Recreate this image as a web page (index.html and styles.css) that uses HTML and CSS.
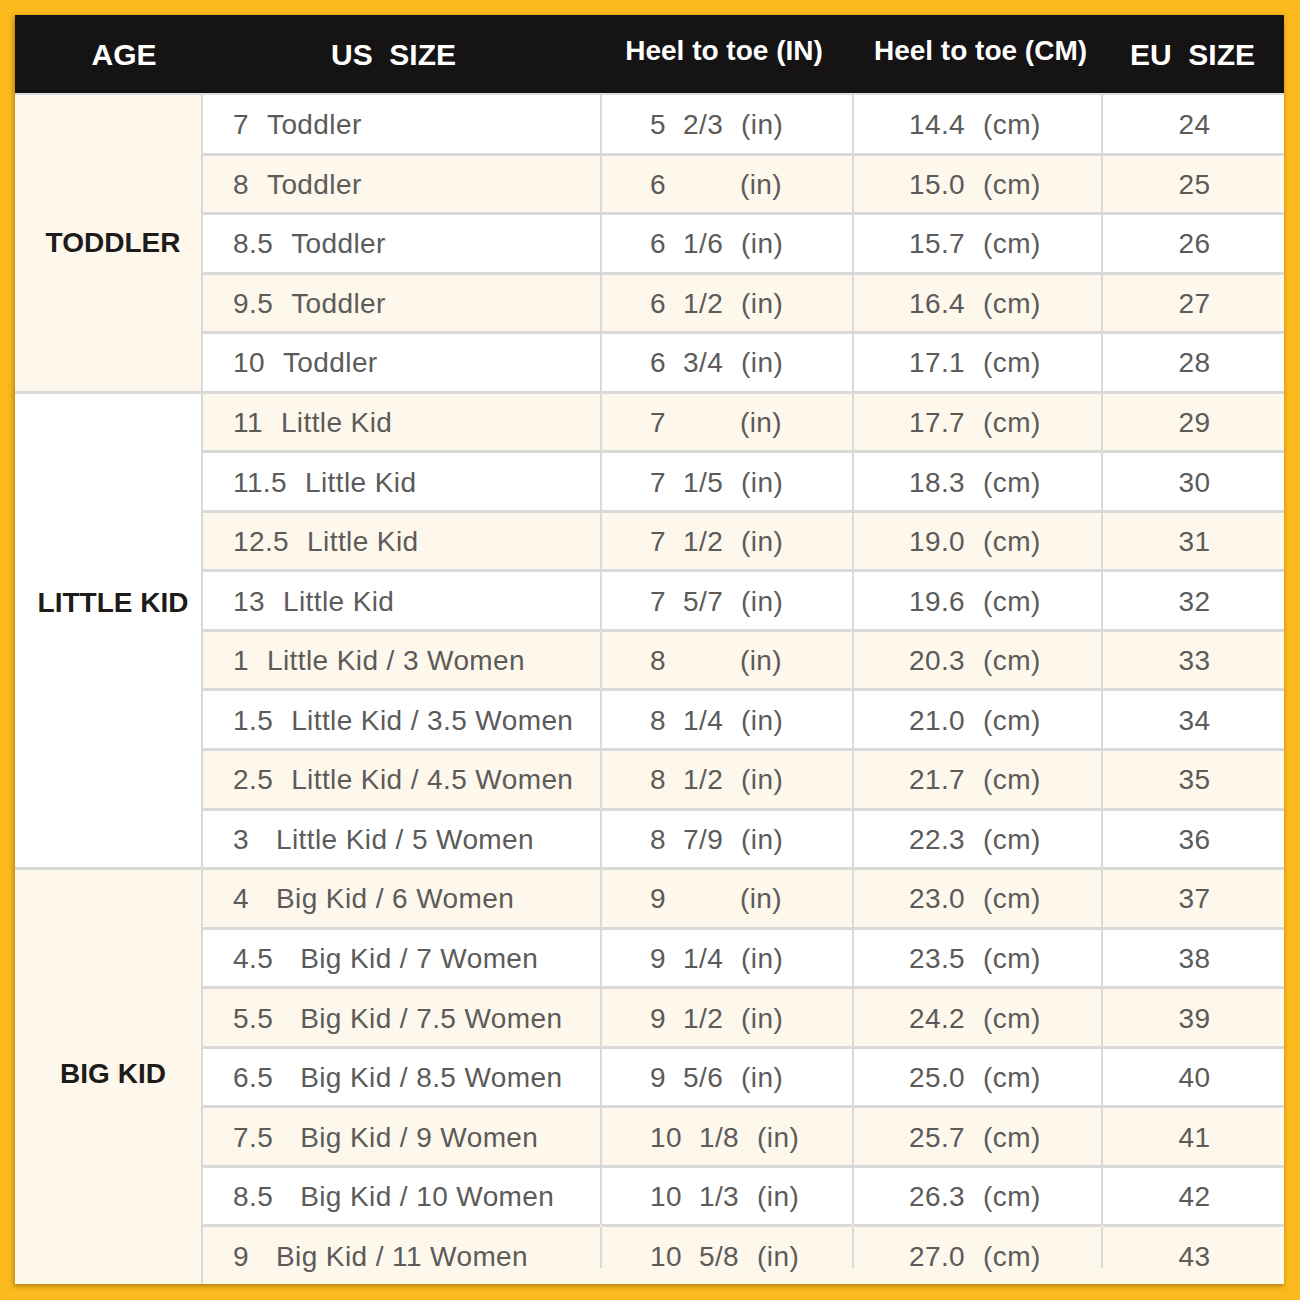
FILE: index.html
```html
<!DOCTYPE html>
<html lang="en">
<head>
<meta charset="utf-8">
<title>Size Chart</title>
<link rel="stylesheet" href="styles.css">
</head>
<body>
<div class="page">
  <div class="chart">
    <div class="hd hd-age big">AGE</div>
    <div class="hd hd-us big">US&nbsp;&nbsp;SIZE</div>
    <div class="hd hd-in">Heel to toe (IN)</div>
    <div class="hd hd-cm">Heel to toe (CM)</div>
    <div class="hd hd-eu big">EU&nbsp;&nbsp;SIZE</div>

    <div class="age age-toddler">TODDLER</div>
    <div class="age age-little">LITTLE KID</div>
    <div class="age age-big">BIG KID</div>

    <div class="c us r1"><span class="n">7</span>Toddler</div>
    <div class="c in r1"><span class="w">5</span><span class="f">2/3</span><span class="u">(in)</span></div>
    <div class="c cm r1"><span class="w">14.4</span><span class="u">(cm)</span></div>
    <div class="c eu r1">24</div>

    <div class="c us alt"><span class="n">8</span>Toddler</div>
    <div class="c in alt"><span class="w">6</span><span class="f"></span><span class="u">(in)</span></div>
    <div class="c cm alt"><span class="w">15.0</span><span class="u">(cm)</span></div>
    <div class="c eu alt">25</div>

    <div class="c us"><span class="n">8.5</span>Toddler</div>
    <div class="c in"><span class="w">6</span><span class="f">1/6</span><span class="u">(in)</span></div>
    <div class="c cm"><span class="w">15.7</span><span class="u">(cm)</span></div>
    <div class="c eu">26</div>

    <div class="c us alt"><span class="n">9.5</span>Toddler</div>
    <div class="c in alt"><span class="w">6</span><span class="f">1/2</span><span class="u">(in)</span></div>
    <div class="c cm alt"><span class="w">16.4</span><span class="u">(cm)</span></div>
    <div class="c eu alt">27</div>

    <div class="c us"><span class="n">10</span>Toddler</div>
    <div class="c in"><span class="w">6</span><span class="f">3/4</span><span class="u">(in)</span></div>
    <div class="c cm"><span class="w">17.1</span><span class="u">(cm)</span></div>
    <div class="c eu">28</div>

    <div class="c us alt"><span class="n">11</span>Little Kid</div>
    <div class="c in alt"><span class="w">7</span><span class="f"></span><span class="u">(in)</span></div>
    <div class="c cm alt"><span class="w">17.7</span><span class="u">(cm)</span></div>
    <div class="c eu alt">29</div>

    <div class="c us"><span class="n">11.5</span>Little Kid</div>
    <div class="c in"><span class="w">7</span><span class="f">1/5</span><span class="u">(in)</span></div>
    <div class="c cm"><span class="w">18.3</span><span class="u">(cm)</span></div>
    <div class="c eu">30</div>

    <div class="c us alt"><span class="n">12.5</span>Little Kid</div>
    <div class="c in alt"><span class="w">7</span><span class="f">1/2</span><span class="u">(in)</span></div>
    <div class="c cm alt"><span class="w">19.0</span><span class="u">(cm)</span></div>
    <div class="c eu alt">31</div>

    <div class="c us"><span class="n">13</span>Little Kid</div>
    <div class="c in"><span class="w">7</span><span class="f">5/7</span><span class="u">(in)</span></div>
    <div class="c cm"><span class="w">19.6</span><span class="u">(cm)</span></div>
    <div class="c eu">32</div>

    <div class="c us alt"><span class="n">1</span>Little Kid / 3 Women</div>
    <div class="c in alt"><span class="w">8</span><span class="f"></span><span class="u">(in)</span></div>
    <div class="c cm alt"><span class="w">20.3</span><span class="u">(cm)</span></div>
    <div class="c eu alt">33</div>

    <div class="c us"><span class="n">1.5</span>Little Kid / 3.5 Women</div>
    <div class="c in"><span class="w">8</span><span class="f">1/4</span><span class="u">(in)</span></div>
    <div class="c cm"><span class="w">21.0</span><span class="u">(cm)</span></div>
    <div class="c eu">34</div>

    <div class="c us alt"><span class="n">2.5</span>Little Kid / 4.5 Women</div>
    <div class="c in alt"><span class="w">8</span><span class="f">1/2</span><span class="u">(in)</span></div>
    <div class="c cm alt"><span class="w">21.7</span><span class="u">(cm)</span></div>
    <div class="c eu alt">35</div>

    <div class="c us"><span class="n wide">3</span>Little Kid / 5 Women</div>
    <div class="c in"><span class="w">8</span><span class="f">7/9</span><span class="u">(in)</span></div>
    <div class="c cm"><span class="w">22.3</span><span class="u">(cm)</span></div>
    <div class="c eu">36</div>

    <div class="c us alt"><span class="n wide">4</span>Big Kid / 6 Women</div>
    <div class="c in alt"><span class="w">9</span><span class="f"></span><span class="u">(in)</span></div>
    <div class="c cm alt"><span class="w">23.0</span><span class="u">(cm)</span></div>
    <div class="c eu alt">37</div>

    <div class="c us"><span class="n wide">4.5</span>Big Kid / 7 Women</div>
    <div class="c in"><span class="w">9</span><span class="f">1/4</span><span class="u">(in)</span></div>
    <div class="c cm"><span class="w">23.5</span><span class="u">(cm)</span></div>
    <div class="c eu">38</div>

    <div class="c us alt"><span class="n wide">5.5</span>Big Kid / 7.5 Women</div>
    <div class="c in alt"><span class="w">9</span><span class="f">1/2</span><span class="u">(in)</span></div>
    <div class="c cm alt"><span class="w">24.2</span><span class="u">(cm)</span></div>
    <div class="c eu alt">39</div>

    <div class="c us"><span class="n wide">6.5</span>Big Kid / 8.5 Women</div>
    <div class="c in"><span class="w">9</span><span class="f">5/6</span><span class="u">(in)</span></div>
    <div class="c cm"><span class="w">25.0</span><span class="u">(cm)</span></div>
    <div class="c eu">40</div>

    <div class="c us alt"><span class="n wide">7.5</span>Big Kid / 9 Women</div>
    <div class="c in alt"><span class="w">10</span><span class="f">1/8</span><span class="u">(in)</span></div>
    <div class="c cm alt"><span class="w">25.7</span><span class="u">(cm)</span></div>
    <div class="c eu alt">41</div>

    <div class="c us"><span class="n wide">8.5</span>Big Kid / 10 Women</div>
    <div class="c in"><span class="w">10</span><span class="f">1/3</span><span class="u">(in)</span></div>
    <div class="c cm"><span class="w">26.3</span><span class="u">(cm)</span></div>
    <div class="c eu">42</div>

    <div class="c us alt last"><span class="n wide">9</span>Big Kid / 11 Women</div>
    <div class="c in alt last"><span class="w">10</span><span class="f">5/8</span><span class="u">(in)</span></div>
    <div class="c cm alt last"><span class="w">27.0</span><span class="u">(cm)</span></div>
    <div class="c eu alt last">43</div>
  </div>
</div>
</body>
</html>
```

FILE: styles.css
```css
* { box-sizing: border-box; }

html, body {
  margin: 0;
  padding: 0;
}

body {
  background: #fbba1e;
  font-family: "Liberation Sans", Arial, Helvetica, sans-serif;
}

.page {
  width: 1300px;
  height: 1300px;
  padding: 15px 16px 16px 15px;
  background: #fbba1e;
}

.chart {
  width: 1269px;
  height: 1269px;
  display: grid;
  grid-template-columns: 186px 399px 252px 249px 183px;
  grid-template-rows: 78px repeat(20, 1fr);
  background: #ffffff;
  box-shadow: -1px 2px 5px rgba(110, 70, 0, 0.55);
}

/* header */
.hd {
  grid-row: 1;
  background: #161314;
  color: #ffffff;
  font-weight: bold;
  font-size: 28px;
  display: flex;
  align-items: center;
  justify-content: center;
  padding-bottom: 6px;
  white-space: nowrap;
}
.hd.big {
  font-size: 30px;
  padding-bottom: 0;
  padding-top: 1px;
}
.hd-age { grid-column: 1; padding-left: 32px; }
.hd-us  { grid-column: 2; padding-right: 14px; }
.hd-in  { grid-column: 3; padding-right: 4px; }
.hd-cm  { grid-column: 4; padding-left: 8px; }
.hd-eu  { grid-column: 5; }

/* age groups */
.age {
  grid-column: 1;
  display: flex;
  align-items: center;
  justify-content: center;
  padding-left: 10px;
  font-weight: bold;
  font-size: 28px;
  color: #1e1c1a;
  white-space: nowrap;
}
.age-toddler {
  grid-row: 2 / span 5;
  background: #fdf7ec;
  border-top: 2px solid #dcdcdc;
}
.age-little {
  grid-row: 7 / span 8;
  background: #ffffff;
  border-top: 3px solid #d9d9d9;
  padding-bottom: 54px;
}
.age-big {
  grid-row: 15 / span 7;
  background: #fdf7ec;
  border-top: 3px solid #d9d9d9;
  padding-bottom: 6px;
}

/* body cells */
.c {
  display: flex;
  align-items: center;
  font-size: 28px;
  letter-spacing: 0.4px;
  color: #5c5b59;
  background: #ffffff;
  border-top: 3px solid #d9d9d9;
  border-left: 2px solid #d9d9d9;
  padding-top: 2px;
  white-space: nowrap;
}
.c.r1 { border-top: 2px solid #dcdcdc; }
.c.alt { background: #fdf7ec; }

/* in the last row the column rules stop short of the bottom edge */
.c.last {
  border-left-color: transparent;
  background-image: linear-gradient(#d9d9d9, #d9d9d9);
  background-size: 2px calc(100% - 16px);
  background-repeat: no-repeat;
  background-position: 0 0;
  background-origin: border-box;
}
.us.last {
  border-left-color: #d9d9d9;
  background-image: none;
}

.us { grid-column: 2; padding-left: 30px; }
.in { grid-column: 3; padding-left: 48px; }
.cm { grid-column: 4; padding-left: 55px; }
.eu { grid-column: 5; justify-content: center; padding-left: 2px; }

.n { margin-right: 18px; }
.n.wide { margin-right: 27px; }

.f {
  display: inline-block;
  min-width: 39px;
  margin-left: 17px;
}
.u { margin-left: 18px; }
.cm .u { margin-left: 18px; }
```
